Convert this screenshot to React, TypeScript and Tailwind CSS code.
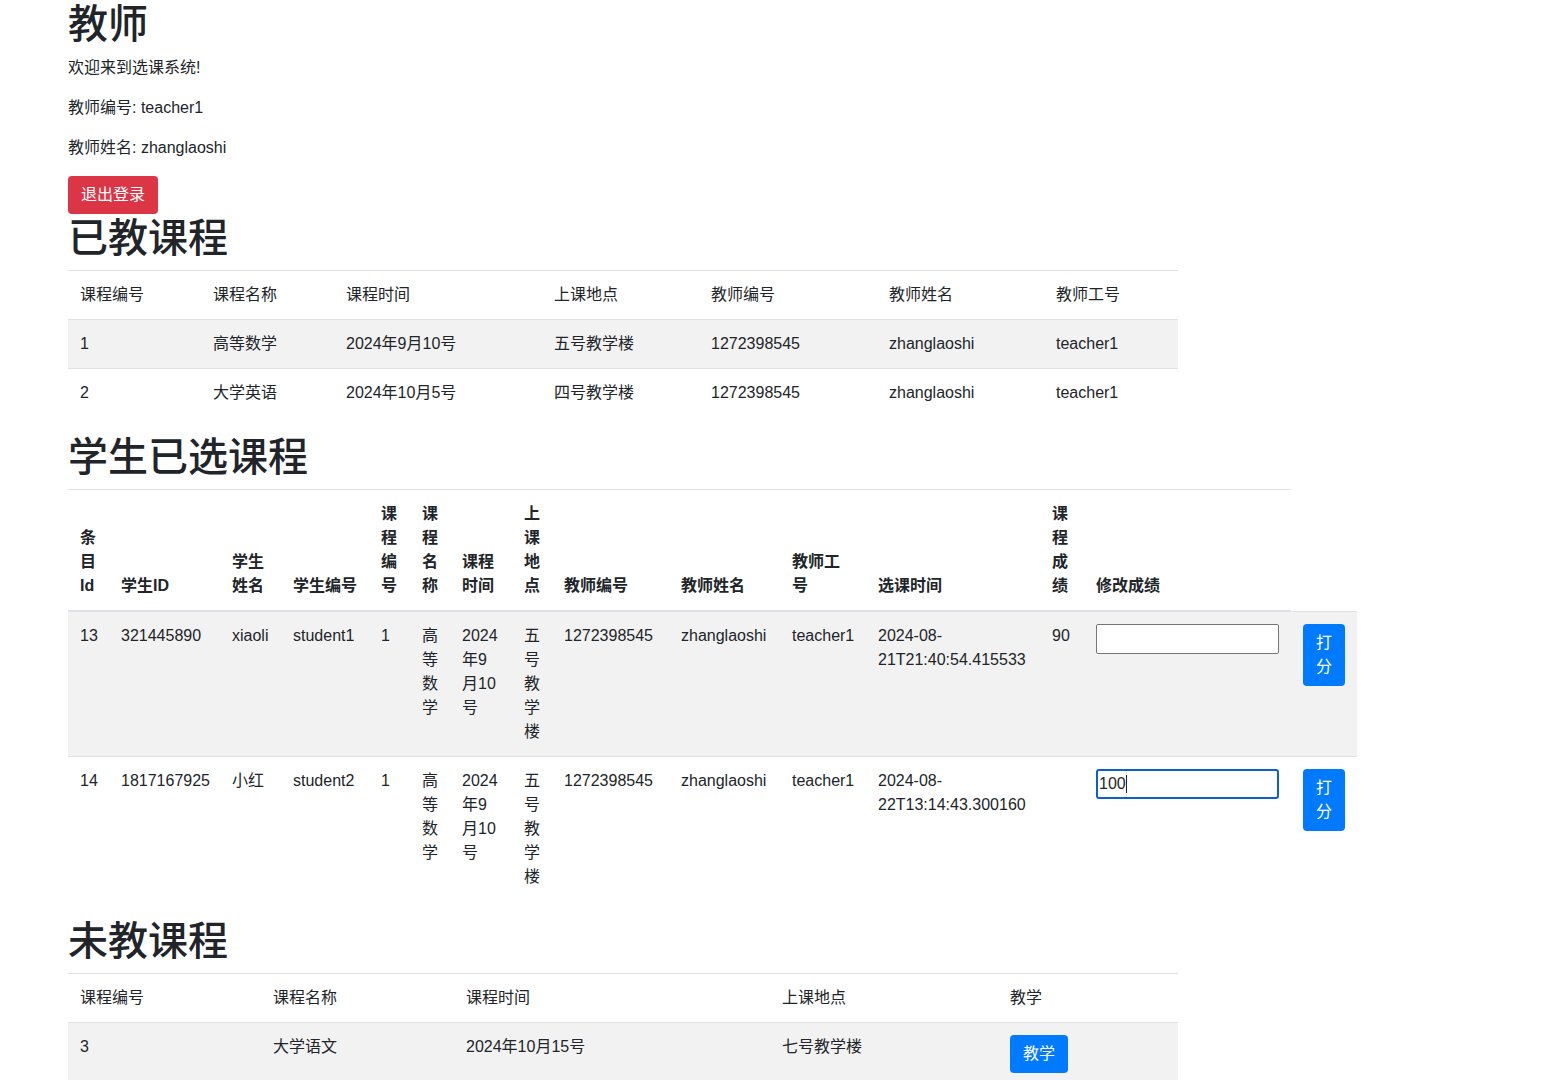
import React from "react";

const taught = [
  ["1", "高等数学", "2024年9月10号", "五号教学楼", "1272398545", "zhanglaoshi", "teacher1"],
  ["2", "大学英语", "2024年10月5号", "四号教学楼", "1272398545", "zhanglaoshi", "teacher1"],
];

const taughtCols = [133, 133, 208, 157, 178, 167, 134];
const taughtHead = ["课程编号", "课程名称", "课程时间", "上课地点", "教师编号", "教师姓名", "教师工号"];

const picks = [
  ["13", "321445890", "xiaoli", "student1", "1", "高等数学", "2024年9月10号", "五号教学楼", "1272398545", "zhanglaoshi", "teacher1", "2024-08-21T21:40:54.415533", "90", ""],
  ["14", "1817167925", "小红", "student2", "1", "高等数学", "2024年9月10号", "五号教学楼", "1272398545", "zhanglaoshi", "teacher1", "2024-08-22T13:14:43.300160", "", "100"],
];

const pickCols = [41, 111, 61, 88, 41, 40, 62, 40, 117, 111, 86, 174, 44, 207, 66];
const pickHead = ["条目Id", "学生ID", "学生姓名", "学生编号", "课程编号", "课程名称", "课程时间", "上课地点", "教师编号", "教师姓名", "教师工号", "选课时间", "课程成绩", "修改成绩"];

const untaughtCols = [193, 193, 316, 228, 180];

function Btn({ color, children, className = "" }: { color: string; children: React.ReactNode; className?: string }) {
  return (
    <button className={`${color} text-white text-base leading-6 px-3 py-1.5 border border-transparent rounded ${className}`}>
      {children}
    </button>
  );
}

export default function App() {
  return (
    <div className="min-h-screen bg-white text-[#212529] text-base leading-6 font-['Liberation_Sans','Noto_Sans_CJK_SC',sans-serif]">
      <div className="pl-[68px]">
        <h1 className="text-[40px] leading-[48px] font-medium mb-2">教师</h1>
        <p className="mb-4">欢迎来到选课系统!</p>
        <p className="mb-4">教师编号: teacher1</p>
        <p className="mb-4">教师姓名: zhanglaoshi</p>
        <Btn color="bg-[#dc3545]">退出登录</Btn>

        {/* 已教课程 */}
        <h1 className="text-[40px] leading-[48px] font-medium mb-2">已教课程</h1>
        <table className="table-fixed border-collapse w-[1110px] mb-4">
          <colgroup>
            {taughtCols.map((w, i) => (
              <col key={i} style={{ width: w }} />
            ))}
          </colgroup>
          <thead>
            <tr>
              {taughtHead.map((h) => (
                <td key={h} className="p-3 border-t border-[#dee2e6] text-left align-top">{h}</td>
              ))}
            </tr>
          </thead>
          <tbody>
            {taught.map((r, i) => (
              <tr key={i} className={i % 2 === 0 ? "bg-[#f2f2f2]" : ""}>
                {r.map((c, j) => (
                  <td key={j} className="p-3 border-t border-[#dee2e6] align-top">{c}</td>
                ))}
              </tr>
            ))}
          </tbody>
        </table>

        {/* 学生已选课程 */}
        <h1 className="text-[40px] leading-[48px] font-medium mb-2">学生已选课程</h1>
        <table className="table-fixed border-collapse w-[1289px] mb-4">
          <colgroup>
            {pickCols.map((w, i) => (
              <col key={i} style={{ width: w }} />
            ))}
          </colgroup>
          <thead>
            <tr>
              {pickHead.map((h) => (
                <th key={h} className="p-3 border-t border-b-2 border-[#dee2e6] text-left align-bottom font-bold">{h}</th>
              ))}
            </tr>
          </thead>
          <tbody>
            {picks.map((r, i) => (
              <tr key={i} className={i % 2 === 0 ? "bg-[#f2f2f2]" : ""}>
                {r.slice(0, 13).map((c, j) => (
                  <td key={j} className="p-3 border-t border-[#dee2e6] align-top">{c}</td>
                ))}
                <td className="p-3 border-t border-[#dee2e6] align-top">
                  {r[13] ? (
                    <div className="w-[183px] h-[30px] bg-white border-2 border-[#0b5fcf] rounded-[3px] px-[1px] flex items-center">
                      <span>{r[13]}</span>
                      <span className="w-px h-[18px] bg-[#212529]"></span>
                    </div>
                  ) : (
                    <input className="block w-[183px] h-[30px] bg-white border border-[#767676] rounded-[2px] px-0.5 outline-none" />
                  )}
                </td>
                <td className="p-3 border-t border-[#dee2e6] align-top">
                  <Btn color="bg-[#007bff]" className="w-[42px]">打分</Btn>
                </td>
              </tr>
            ))}
          </tbody>
        </table>

        {/* 未教课程 */}
        <h1 className="text-[40px] leading-[48px] font-medium mb-2">未教课程</h1>
        <table className="table-fixed border-collapse w-[1110px] mb-4">
          <colgroup>
            {untaughtCols.map((w, i) => (
              <col key={i} style={{ width: w }} />
            ))}
          </colgroup>
          <thead>
            <tr>
              {["课程编号", "课程名称", "课程时间", "上课地点", "教学"].map((h) => (
                <td key={h} className="p-3 border-t border-[#dee2e6] align-top">{h}</td>
              ))}
            </tr>
          </thead>
          <tbody>
            <tr className="bg-[#f2f2f2]">
              <td className="p-3 border-t border-[#dee2e6] align-top">3</td>
              <td className="p-3 border-t border-[#dee2e6] align-top">大学语文</td>
              <td className="p-3 border-t border-[#dee2e6] align-top">2024年10月15号</td>
              <td className="p-3 border-t border-[#dee2e6] align-top">七号教学楼</td>
              <td className="p-3 border-t border-[#dee2e6] align-top">
                <Btn color="bg-[#007bff]">教学</Btn>
              </td>
            </tr>
          </tbody>
        </table>
      </div>
    </div>
  );
}
